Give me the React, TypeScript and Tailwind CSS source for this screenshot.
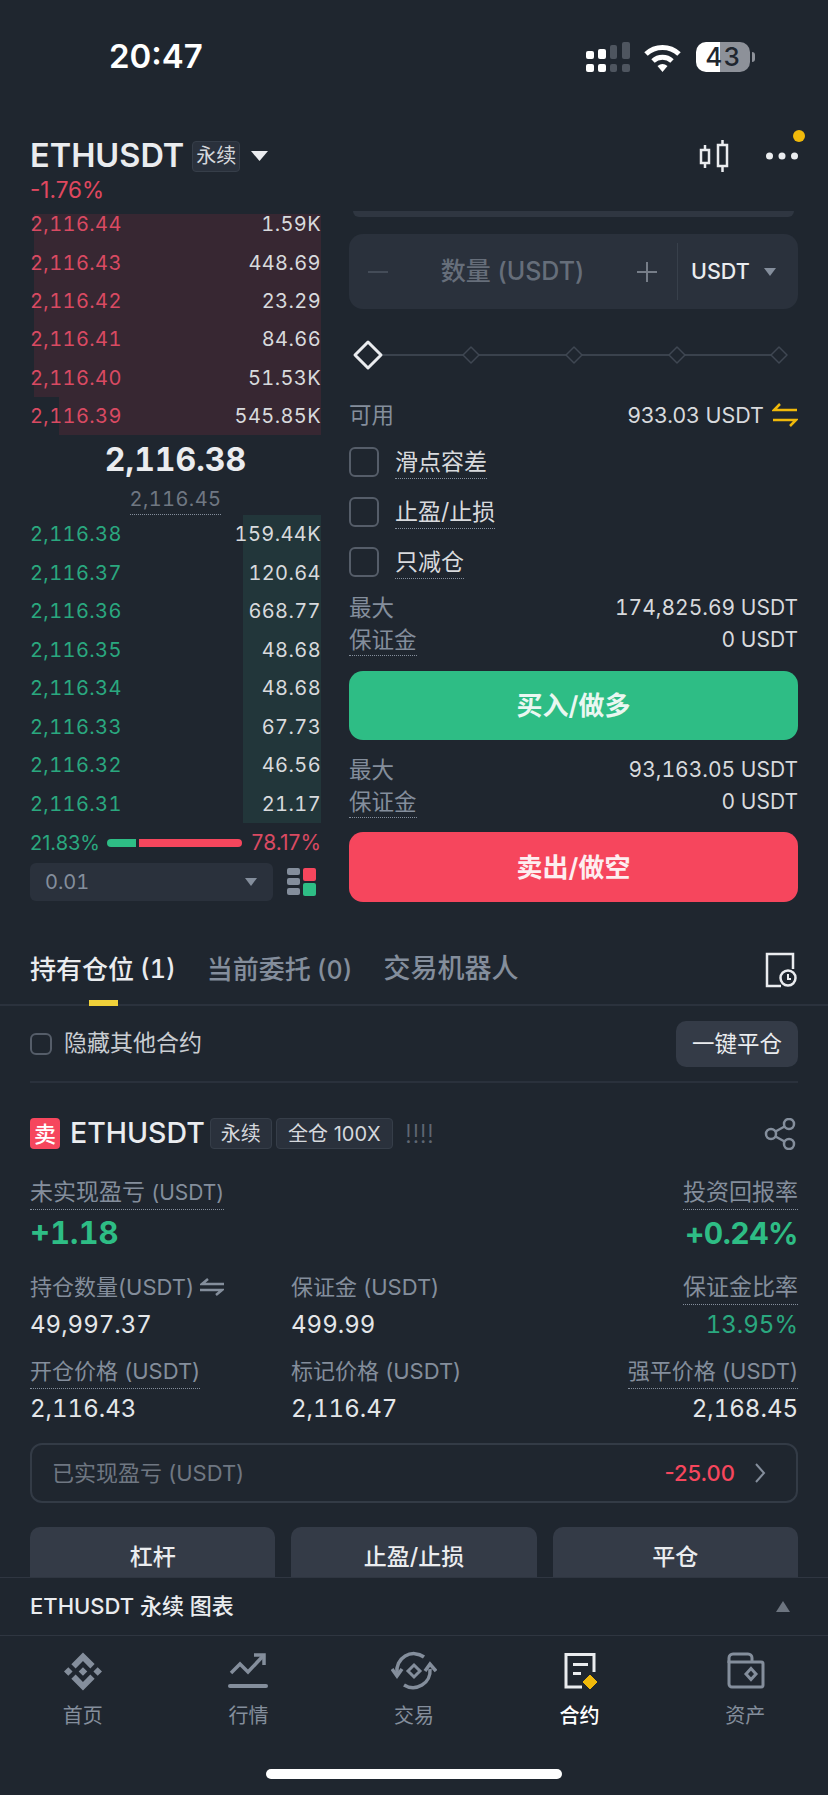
import React from 'react';

const asks = [
  { price: '2,116.44', qty: '1.59K', bar: 287 },
  { price: '2,116.43', qty: '448.69', bar: 287 },
  { price: '2,116.42', qty: '23.29', bar: 287 },
  { price: '2,116.41', qty: '84.66', bar: 287 },
  { price: '2,116.40', qty: '51.53K', bar: 287 },
  { price: '2,116.39', qty: '545.85K', bar: 262 },
];

const bids = [
  { price: '2,116.38', qty: '159.44K' },
  { price: '2,116.37', qty: '120.64' },
  { price: '2,116.36', qty: '668.77' },
  { price: '2,116.35', qty: '48.68' },
  { price: '2,116.34', qty: '48.68' },
  { price: '2,116.33', qty: '67.73' },
  { price: '2,116.32', qty: '46.56' },
  { price: '2,116.31', qty: '21.17' },
];

const Caret = ({ w, h, color, up }: { w: number; h: number; color: string; up?: boolean }) => (
  <svg width={w} height={h} viewBox="0 0 10 8" preserveAspectRatio="none">
    <polygon points={up ? '5,0 10,8 0,8' : '0,0 10,0 5,8'} fill={color} />
  </svg>
);

const StatusBar = () => (
  <div className="flex h-[114px] shrink-0 items-center justify-between pl-[109px] pr-[73px]">
    <span className="text-[33px] font-semibold text-white">20:47</span>
    <div className="flex items-center">
      <svg width="44" height="31" viewBox="0 0 44 31">
        <g fill="#ffffff">
          <rect x="0" y="9" width="8" height="8" rx="2" />
          <rect x="0" y="22" width="8" height="8" rx="2" />
          <rect x="12" y="7" width="8" height="10" rx="2" />
          <rect x="12" y="22" width="8" height="8" rx="2" />
        </g>
        <g fill="#4e555f">
          <rect x="24" y="3" width="7" height="14" rx="2" />
          <rect x="24" y="22" width="7" height="8" rx="2" />
          <rect x="36" y="0" width="8" height="17" rx="2" />
          <rect x="36" y="22" width="8" height="8" rx="2" />
        </g>
      </svg>
      <svg className="ml-[14px]" width="37" height="29" viewBox="0 0 37 29" fill="none" stroke="#ffffff" strokeWidth="5">
        <path d="M2 11A24 24 0 0 1 35 11" />
        <path d="M9 18A14 14 0 0 1 28 18" />
        <path d="M13.5 23Q18.5 19 23.5 23L18.5 29Z" fill="#ffffff" stroke="none" />
      </svg>
      <div className="relative ml-[15px] flex h-[30px] w-[54px] overflow-hidden rounded-[10px]">
        <div className="w-[24px] bg-white" />
        <div className="flex-1 bg-[#8d9199]" />
        <span className="absolute inset-0 flex items-center justify-center text-[26px] font-medium leading-none tracking-[1px] text-[#1f262f]">43</span>
      </div>
      <div className="ml-[2px] h-[10px] w-[3px] rounded-r-sm bg-[#8d9199]" />
    </div>
  </div>
);

const Header = () => (
  <>
    <div className="mt-[20px] flex h-[44px] shrink-0 items-center px-[30px]">
      <span className="text-[32.5px] font-semibold leading-none text-[#eaecef]">ETHUSDT</span>
      <span className="ml-[8px] flex h-[31px] w-[48px] items-center justify-center rounded border border-[#363e49] bg-[#2a313c] text-[20px] text-[#d5d8dc]">永续</span>
      <span className="ml-[11px]"><Caret w={17} h={10} color="#eaecef" /></span>
      <div className="relative ml-auto flex items-center">
        <svg width="30" height="32" viewBox="0 0 30 32" fill="none" stroke="#eaecef" strokeWidth="2.5">
          <rect x="2" y="10" width="8" height="13" />
          <path d="M6 5V10M6 23V28" />
          <rect x="19" y="5" width="9" height="21" />
          <path d="M23.5 0V5M23.5 26V32" />
        </svg>
        <svg className="ml-[37px]" width="32" height="8" viewBox="0 0 32 8" fill="#eaecef">
          <circle cx="3.5" cy="4" r="3.5" />
          <circle cx="16" cy="4" r="3.5" />
          <circle cx="28.5" cy="4" r="3.5" />
        </svg>
        <span className="absolute -right-[7px] -top-[10px] h-[12px] w-[12px] rounded-full bg-[#f0b90b]" />
      </div>
    </div>
    <div className="flex h-[27px] shrink-0 items-center px-[30px] pb-[4px] text-[22.5px] text-[#e0485f]">-1.76%</div>
  </>
);

const OrderBook = () => (
  <div className="flex w-[291px] shrink-0 flex-col tabular-nums">
    <div className="flex flex-col">
      {asks.map((r, i) => (
        <div key={r.price} className="relative flex h-[38.4px] items-center justify-between text-[20px]">
          <div className={`absolute bottom-0 right-0 bg-[#372732] ${i === 0 ? 'top-[9px]' : 'top-0'}`} style={{ width: r.bar }} />
          <span className="relative tracking-[0.4px] text-[#d94a62]">{r.price}</span>
          <span className="relative tracking-[0.4px] text-[#d8dadd]">{r.qty}</span>
        </div>
      ))}
    </div>
    <div className="flex h-[79.6px] flex-col items-center">
      <span className="mt-[4px] text-[32px] font-bold leading-[41px] text-[#eaecef]">2,116.38</span>
      <span className="mt-[6px] h-[31px] border-b border-dotted border-[#848e9c] text-[20px] leading-[26px] tracking-[0.4px] text-[#6f7782]">2,116.45</span>
    </div>
    <div className="flex flex-col">
      {bids.map((r) => (
        <div key={r.price} className="relative flex h-[38.5px] items-center justify-between text-[20px]">
          <div className="absolute inset-y-0 right-0 w-[78px] bg-[#22363a]" />
          <span className="relative tracking-[0.4px] text-[#2aa87f]">{r.price}</span>
          <span className="relative tracking-[0.4px] text-[#d8dadd]">{r.qty}</span>
        </div>
      ))}
    </div>
    <div className="flex h-[40px] items-center normal-nums">
      <span className="w-[77px] text-[20px] text-[#2aa87f]">21.83%</span>
      <div className="h-[8px] w-[29px] rounded-l-full bg-[#2ebd85]" />
      <div className="ml-[3px] h-[8px] w-[103px] rounded-r-full bg-[#f6465d]" />
      <span className="ml-auto text-[21px] text-[#d94a62]">78.17%</span>
    </div>
    <div className="flex h-[38px] items-center">
      <div className="flex h-full w-[243px] items-center justify-between rounded-md bg-[#2a313c] pl-[15px] pr-[16px] text-[20px] text-[#848e9c]">
        <span>0.01</span>
        <Caret w={12} h={8} color="#848e9c" />
      </div>
      <div className="ml-[14px] flex items-center gap-[3px]">
        <div className="flex flex-col gap-[3px]">
          <div className="h-[7px] w-[13px] rounded-[2px] bg-[#848e9c]" />
          <div className="h-[7px] w-[13px] rounded-[2px] bg-[#848e9c]" />
          <div className="h-[7px] w-[13px] rounded-[2px] bg-[#848e9c]" />
        </div>
        <div className="flex flex-col gap-[2px]">
          <div className="h-[13px] w-[13px] rounded-[2px] bg-[#f6465d]" />
          <div className="h-[13px] w-[13px] rounded-[2px] bg-[#2ebd85]" />
        </div>
      </div>
    </div>
  </div>
);

const CheckRow = ({ label, className }: { label: string; className: string }) => (
  <div className={`flex h-[30px] items-center ${className}`}>
    <span className="h-[30px] w-[30px] rounded-md border-2 border-[#555d69]" />
    <span className="ml-[16px] border-b border-dotted border-[#848e9c] text-[23px] leading-[32px] text-[#d8dadd]">{label}</span>
  </div>
);

const Slider = () => (
  <svg className="mt-[30px]" width="449" height="32" viewBox="0 0 449 32" fill="#1f262f">
    <path d="M30 16H430" stroke="#3a424d" strokeWidth="2" />
    <g stroke="#3f4752" strokeWidth="1.5" strokeLinejoin="round">
      <polygon points="122,8 130,16 122,24 114,16" />
      <polygon points="225,8 233,16 225,24 217,16" />
      <polygon points="328,8 336,16 328,24 320,16" />
      <polygon points="430,8 438,16 430,24 422,16" />
    </g>
    <polygon points="19,3 32,16 19,29 6,16" stroke="#eaecef" strokeWidth="3" strokeLinejoin="round" />
  </svg>
);

const MarginRows = ({ max, className }: { max: string; className: string }) => (
  <div className={`tabular-nums ${className}`}>
    <div className="flex h-[32px] items-center justify-between text-[21px] text-[#d8dadd]">
      <span className="text-[22.5px] text-[#848e9c]">最大</span>
      <span>{max}</span>
    </div>
    <div className="flex h-[32px] items-center justify-between text-[21px] text-[#d8dadd]">
      <span className="border-b border-dotted border-[#848e9c] text-[22.5px] leading-[30px] text-[#848e9c]">保证金</span>
      <span>0 USDT</span>
    </div>
  </div>
);

const OrderForm = () => (
  <div className="ml-[28px] flex flex-1 flex-col">
    <div className="mx-[4px] mt-[6px] h-[6px] rounded-b-[6px] bg-[#2f3641]" />
    <div className="mt-[17px] flex h-[75px] items-center rounded-[14px] bg-[#2a313c]">
      <div className="ml-[19px] h-[2px] w-[20px] bg-[#444c58]" />
      <span className="w-[249px] text-center text-[25px] font-medium text-[#666e7a]">数量 (USDT)</span>
      <svg width="20" height="20" viewBox="0 0 20 20" stroke="#767d88" strokeWidth="2">
        <path d="M0 10H20M10 0V20" />
      </svg>
      <div className="ml-[20px] h-[57px] w-px bg-[#38404b]" />
      <span className="ml-[13px] text-[21.5px] font-medium text-[#eaecef]">USDT</span>
      <span className="ml-[14px]"><Caret w={12} h={8} color="#848e9c" /></span>
    </div>
    <Slider />
    <div className="mt-[28px] flex h-[32px] items-center justify-between">
      <span className="text-[22.5px] text-[#848e9c]">可用</span>
      <div className="flex items-center text-[21.5px] text-[#d8dadd]">
        933.03 USDT
        <svg className="ml-[8px]" width="26" height="26" viewBox="0 0 26 26" fill="none" stroke="#f0b90b" strokeWidth="2.5">
          <path d="M25 8H2L8 2" />
          <path d="M1 18H24L18 24" />
        </svg>
      </div>
    </div>
    <CheckRow label="滑点容差" className="mt-[16px]" />
    <CheckRow label="止盈/止损" className="mt-[20px]" />
    <CheckRow label="只减仓" className="mt-[20px]" />
    <MarginRows max="174,825.69 USDT" className="mt-[15px]" />
    <button className="mt-[15px] h-[69px] rounded-[14px] bg-[#2ebd85] text-[26px] font-semibold text-[#eaf7f1]">买入/做多</button>
    <MarginRows max="93,163.05 USDT" className="mt-[14px]" />
    <button className="mt-[14px] h-[70px] rounded-[14px] bg-[#f6465d] text-[26px] font-semibold text-[#fdeef0]">卖出/做空</button>
  </div>
);

const Tabs = () => (
  <div className="flex h-[71px] shrink-0 items-center border-b-2 border-[#2b323d] px-[30px]">
    <div className="relative flex h-full items-center text-[26px] font-medium text-[#eaecef]">
      持有仓位<span className="ml-[6px] text-[25px] tabular-nums">(1)</span>
      <span className="absolute -bottom-[2px] left-[59px] h-[6px] w-[29px] bg-[#f0d13a]" />
    </div>
    <div className="ml-[31px] text-[26px] font-medium text-[#848e9c]">
      当前委托<span className="ml-[6px] text-[25px] tabular-nums">(0)</span>
    </div>
    <div className="ml-[31px] text-[27px] font-medium text-[#848e9c]">交易机器人</div>
    <svg className="ml-auto" width="34" height="40" viewBox="0 0 34 40" fill="none" stroke="#eaecef" strokeWidth="2.5">
      <path d="M17 36H3V4H29V19" />
      <circle cx="24" cy="28" r="7.5" />
      <path d="M24 24V29H27" strokeWidth="2" />
    </svg>
  </div>
);

const Stat = ({ label, value, right, valueClass, labelClass, extra }: { label: string; value: string; right?: boolean; valueClass?: string; labelClass?: string; extra?: React.ReactNode }) => (
  <div className={`flex flex-col ${right ? 'items-end' : 'items-start'}`}>
    <div className="flex h-[36px] items-center">
      <span className={`h-[36px] leading-[36px] text-[#848e9c] ${labelClass ?? 'text-[22px]'} ${extra ? '' : 'border-b border-dotted border-[#848e9c]'}`}>{label}</span>
      {extra}
    </div>
    <span className={`mt-[2px] h-[36px] text-[24px] leading-[36px] tabular-nums ${valueClass ?? 'text-[#e4e6e9]'}`}>{value}</span>
  </div>
);

const Positions = () => (
  <div className="flex-1 overflow-hidden px-[30px]">
    <div className="flex h-[77px] items-center justify-between border-b-2 border-[#2a313c]">
      <div className="flex items-center">
        <span className="h-[22px] w-[22px] rounded-md border-2 border-[#555d69]" />
        <span className="ml-[12px] text-[23px] text-[#c9cdd2]">隐藏其他合约</span>
      </div>
      <button className="flex h-[46px] w-[122px] items-center justify-center rounded-[10px] bg-[#343b47] text-[22.5px] text-[#eaecef]">一键平仓</button>
    </div>
    <div className="mt-[35px] flex h-[31px] items-center">
      <span className="flex h-[31px] w-[30px] items-center justify-center rounded bg-[#f6465d] text-[22px] font-medium leading-none text-white">卖</span>
      <span className="ml-[10px] text-[28.5px] font-medium text-[#eaecef]">ETHUSDT</span>
      <span className="ml-[5px] flex h-[31px] w-[62px] items-center justify-center rounded border border-[#363e49] bg-[#2a313c] text-[20px] text-[#d5d8dc]">永续</span>
      <span className="ml-[4px] flex h-[31px] w-[117px] items-center justify-center rounded border border-[#363e49] bg-[#2a313c] text-[20px] text-[#d5d8dc]">全仓 100X</span>
      <span className="ml-[12px] text-[26px] font-light text-[#5f6773]">!!!!</span>
      <svg className="ml-auto mr-[2px]" width="32" height="32" viewBox="0 0 32 32" fill="none" stroke="#848e9c" strokeWidth="2.5">
        <circle cx="7" cy="16" r="5" />
        <circle cx="25" cy="6" r="5" />
        <circle cx="25" cy="26" r="5" />
        <path d="M11.5 13.5L20.5 8.5M11.5 18.5L20.5 23.5" />
      </svg>
    </div>
    <div className="mt-[25px] flex justify-between">
      <div className="flex flex-col items-start">
        <span className="h-[36px] border-b border-dotted border-[#848e9c] text-[23px] leading-[36px] text-[#848e9c]">未实现盈亏 <span className="text-[21px]">(USDT)</span></span>
        <span className="mt-[3px] h-[40px] text-[31px] font-bold leading-[40px] tabular-nums text-[#2ebd85]">+1.18</span>
      </div>
      <div className="flex flex-col items-end">
        <span className="h-[36px] border-b border-dotted border-[#848e9c] text-[23px] leading-[36px] text-[#848e9c]">投资回报率</span>
        <span className="mt-[3px] h-[40px] text-[30px] font-bold leading-[40px] tracking-[-0.5px] tabular-nums text-[#2ebd85]">+0.24%</span>
      </div>
    </div>
    <div className="mt-[16px] grid grid-cols-[261px_1fr_auto]">
      <Stat
        label="持仓数量(USDT)"
        value="49,997.37"
        extra={
          <svg className="ml-[6px]" width="24" height="18" viewBox="0 0 24 18" fill="none" stroke="#848e9c" strokeWidth="2.5">
            <path d="M24 6H2L8 1" />
            <path d="M0 12H22L16 17" />
          </svg>
        }
      />
      <Stat label="保证金 (USDT)" value="499.99" extra={<span />} />
      <Stat label="保证金比率" labelClass="text-[23px]" value="13.95%" right valueClass="text-[#2aa87f]" />
    </div>
    <div className="mt-[10px] grid grid-cols-[261px_1fr_auto]">
      <Stat label="开仓价格 (USDT)" value="2,116.43" />
      <Stat label="标记价格 (USDT)" value="2,116.47" extra={<span />} />
      <Stat label="强平价格 (USDT)" value="2,168.45" right />
    </div>
    <div className="mt-[16px] flex h-[60px] items-center rounded-[12px] border-2 border-[#333b46] pl-[20px] pr-[30px]">
      <span className="text-[22px] text-[#6f7782]">已实现盈亏 (USDT)</span>
      <span className="ml-auto text-[22px] font-medium text-[#f6465d]">-25.00</span>
      <svg className="ml-[19px]" width="12" height="22" viewBox="0 0 12 22" fill="none" stroke="#848e9c" strokeWidth="2">
        <path d="M2 2L10 11L2 20" />
      </svg>
    </div>
    <div className="mt-[24px] grid grid-cols-3 gap-[16px]">
      {['杠杆', '止盈/止损', '平仓'].map((t) => (
        <button key={t} className="h-[60px] rounded-[10px] bg-[#343b47] text-[23px] font-medium text-[#eaecef]">{t}</button>
      ))}
    </div>
  </div>
);

const ChartBar = () => (
  <div className="flex h-[59px] shrink-0 items-center justify-between border-y border-[#2f3641] bg-[#1f262f] pl-[30px] pr-[38px]">
    <span className="text-[22px] font-medium text-[#eaecef]">ETHUSDT 永续 图表</span>
    <Caret w={14} h={11} color="#6d7580" up />
  </div>
);

const HomeIcon = () => (
  <svg width="38" height="39" viewBox="0 0 24 24" fill="#848e9c">
    <path d="M16.624 13.9202l2.7175 2.7154-7.353 7.353-7.353-7.352 2.7175-2.7164 4.6355 4.6595 4.6356-4.6595zm4.6366-4.6366L24 12l-2.7154 2.7164L18.5682 12l2.6924-2.7164zm-9.272.001l2.7163 2.6914-2.7164 2.7174v-.001L9.2721 12l2.7164-2.7154zm-9.2722-.001L5.4088 12l-2.6914 2.6924L0 12l2.7164-2.7164zM11.9885.0115l7.353 7.329-2.7174 2.7154-4.6356-4.6356-4.6355 4.6595-2.7174-2.7154 7.353-7.353z" />
  </svg>
);

const MarketIcon = () => (
  <svg width="40" height="44" viewBox="0 0 40 44" fill="none" stroke="#848e9c" strokeWidth="3.5">
    <path d="M3 24L12 15L20 23L36 6" />
    <path d="M26 6H36V16" />
    <path d="M2 37H38" strokeWidth="4" strokeLinecap="round" />
  </svg>
);

const TradeIcon = () => (
  <svg width="46" height="44" viewBox="0 0 46 44" fill="none" stroke="#848e9c" strokeWidth="3.5">
    <path d="M6 24A17 17 0 0 1 33 8" />
    <path d="M39 20A17 17 0 0 1 13 36" />
    <path d="M1 20L6 27L11 20" />
    <path d="M34 22L39 15L45 22" />
    <polygon points="23,16 29,22 23,28 17,22" strokeWidth="3" />
  </svg>
);

const ContractIcon = () => (
  <svg width="40" height="44" viewBox="0 0 40 44" fill="none" stroke="#eaecef" strokeWidth="3">
    <path d="M22 38H6V5.5H34V23" />
    <path d="M13 15.5H28M13 24.5H21" />
    <polygon points="30,25 38,33 30,41 22,33" fill="#f0b90b" stroke="#1f262f" strokeWidth="1" />
  </svg>
);

const AssetIcon = () => (
  <svg width="40" height="44" viewBox="0 0 40 44" fill="none" stroke="#848e9c" strokeWidth="3">
    <path d="M4 14V9A4 4 0 0 1 8 5H23A4 4 0 0 1 27 9V13" />
    <path d="M4 13H36A2 2 0 0 1 38 15V36A2 2 0 0 1 36 38H7A3 3 0 0 1 4 35Z" />
    <polygon points="26,19.5 31,25 26,30.5 21,25" />
  </svg>
);

const navItems = [
  { label: '首页', icon: <HomeIcon /> },
  { label: '行情', icon: <MarketIcon /> },
  { label: '交易', icon: <TradeIcon /> },
  { label: '合约', icon: <ContractIcon />, active: true },
  { label: '资产', icon: <AssetIcon /> },
];

const BottomNav = () => (
  <div className="shrink-0">
    <div className="grid grid-cols-5 pt-[13px]">
      {navItems.map((n) => (
        <div key={n.label} className="flex flex-col items-center">
          <div className="flex h-[44px] items-center justify-center">{n.icon}</div>
          <span className={`mt-[10px] text-[20px] leading-[26px] ${n.active ? 'font-medium text-white' : 'text-[#848e9c]'}`}>{n.label}</span>
        </div>
      ))}
    </div>
    <div className="mx-auto mt-[40px] h-[10px] w-[296px] rounded-full bg-white" />
    <div className="h-[16px]" />
  </div>
);

export default function App() {
  return (
    <div className="flex h-[1795px] w-[828px] flex-col overflow-hidden bg-[#1f262f] font-[Inter,'Noto_Sans_CJK_SC',sans-serif]">
      <StatusBar />
      <Header />
      <div className="flex h-[730px] shrink-0 px-[30px]">
        <OrderBook />
        <OrderForm />
      </div>
      <Tabs />
      <Positions />
      <ChartBar />
      <BottomNav />
    </div>
  );
}
